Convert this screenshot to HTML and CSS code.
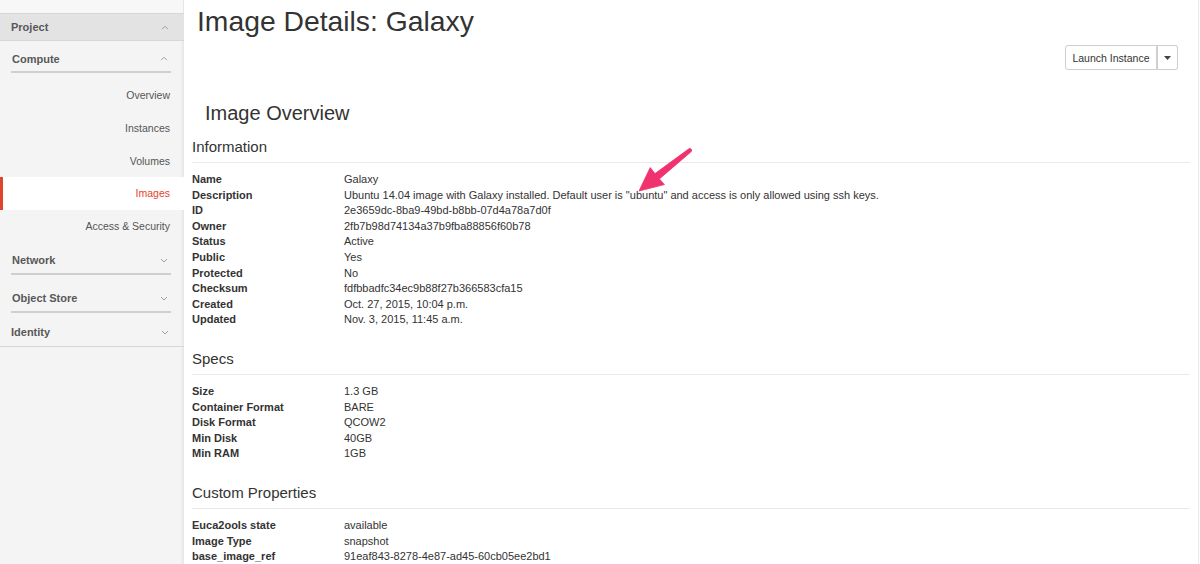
FILE: index.html
```html
<!DOCTYPE html>
<html>
<head>
<meta charset="utf-8">
<link rel="stylesheet" href="styles.css">
</head>
<body>
<div class="layout">
  <aside class="sidebar">
    <div class="sb-top"></div>
    <div class="panel">
      <div class="panel-head active-panel"><span>Project</span><svg class="chev" viewBox="0 0 8 5"><path d="M1 4.2 L4 1.2 L7 4.2"/></svg></div>
      <div class="panel-body">
        <div class="group">
          <div class="group-head"><span>Compute</span><svg class="chev" viewBox="0 0 8 5"><path d="M1 4.2 L4 1.2 L7 4.2"/></svg></div>
          <ul class="nav">
            <li>Overview</li>
            <li>Instances</li>
            <li>Volumes</li>
            <li class="active">Images</li>
            <li>Access &amp; Security</li>
          </ul>
        </div>
        <div class="group">
          <div class="group-head"><span>Network</span><svg class="chev" viewBox="0 0 8 5"><path d="M1 1 L4 4 L7 1"/></svg></div>
        </div>
        <div class="group group-last">
          <div class="group-head"><span>Object Store</span><svg class="chev" viewBox="0 0 8 5"><path d="M1 1 L4 4 L7 1"/></svg></div>
        </div>
      </div>
    </div>
    <div class="panel">
      <div class="panel-head"><span>Identity</span><svg class="chev" viewBox="0 0 8 5"><path d="M1 1 L4 4 L7 1"/></svg></div>
    </div>
  </aside>
  <main class="main">
    <h1 class="page-title">Image Details: Galaxy</h1>
    <div class="actions">
      <div class="btn-group">
        <button class="btn">Launch Instance</button>
        <button class="btn btn-caret"><svg viewBox="0 0 7 4"><path d="M0 0 L7 0 L3.5 4 Z"/></svg></button>
      </div>
    </div>
    <h2 class="overview-title">Image Overview</h2>

    <section class="info-section">
      <h3 class="section-title">Information</h3>
      <dl class="props">
        <dt>Name</dt><dd>Galaxy</dd>
        <dt>Description</dt><dd>Ubuntu 14.04 image with Galaxy installed. Default user is "ubuntu" and access is only allowed using ssh keys.</dd>
        <dt>ID</dt><dd>2e3659dc-8ba9-49bd-b8bb-07d4a78a7d0f</dd>
        <dt>Owner</dt><dd>2fb7b98d74134a37b9fba88856f60b78</dd>
        <dt>Status</dt><dd>Active</dd>
        <dt>Public</dt><dd>Yes</dd>
        <dt>Protected</dt><dd>No</dd>
        <dt>Checksum</dt><dd>fdfbbadfc34ec9b88f27b366583cfa15</dd>
        <dt>Created</dt><dd>Oct. 27, 2015, 10:04 p.m.</dd>
        <dt>Updated</dt><dd>Nov. 3, 2015, 11:45 a.m.</dd>
      </dl>
    </section>

    <section class="info-section">
      <h3 class="section-title">Specs</h3>
      <dl class="props">
        <dt>Size</dt><dd>1.3 GB</dd>
        <dt>Container Format</dt><dd>BARE</dd>
        <dt>Disk Format</dt><dd>QCOW2</dd>
        <dt>Min Disk</dt><dd>40GB</dd>
        <dt>Min RAM</dt><dd>1GB</dd>
      </dl>
    </section>

    <section class="info-section">
      <h3 class="section-title">Custom Properties</h3>
      <dl class="props">
        <dt>Euca2ools state</dt><dd>available</dd>
        <dt>Image Type</dt><dd>snapshot</dd>
        <dt>base_image_ref</dt><dd>91eaf843-8278-4e87-ad45-60cb05ee2bd1</dd>
      </dl>
    </section>
  </main>
</div>
<svg class="annotation" width="1200" height="564" viewBox="0 0 1200 564">
  <path d="M639 191 L650.2 167.6 L655.0 173.6 L689.2 148.6 Q691.2 148.0 691.6 150.0 Q691.6 151.4 690.8 152.0 L659.4 178.9 L664.4 184.6 Z" fill="#f0326f" stroke="#f0326f" stroke-width="0.8" stroke-linejoin="round"/>
</svg>
</body>
</html>
```

FILE: styles.css
```css
* { box-sizing: border-box; }
html, body { margin: 0; padding: 0; }
body {
  font-family: "Liberation Sans", Arial, Helvetica, sans-serif;
  color: #333;
  background: #fff;
  width: 1200px;
  height: 564px;
  overflow: hidden;
  position: relative;
}
.layout {
  display: flex;
  align-items: stretch;
  height: 564px;
}
.sidebar {
  width: 184px;
  flex: 0 0 184px;
  background: #f4f4f4;
  border-right: 1px solid #e6e6e6;
  box-shadow: inset -2px 0 2px rgba(0,0,0,0.03);
}
.sb-top { height: 13px; background: #f7f7f7; }
.panel-head {
  height: 28px;
  display: flex;
  align-items: center;
  justify-content: space-between;
  padding: 0 15px 0 11px;
  font-size: 11px;
  font-weight: bold;
  color: #585858;
  border-top: 1px solid #d6d6d6;
  border-bottom: 1px solid #d6d6d6;
  margin-right: -1px;
}
.panel + .panel .panel-head { border-top: none; height: 28px; }
.active-panel { background: #e3e3e3; }
.chev { width: 8px; height: 5px; }
.chev path { fill: none; stroke: #a0a0a0; stroke-width: 1; }
.panel-body { padding-bottom: 6px; }
.group { padding: 0 12px 0 11px; }
.group-head {
  height: 27px;
  display: flex;
  align-items: center;
  justify-content: space-between;
  padding: 0 3px 0 1px;
  font-size: 11px;
  font-weight: bold;
  color: #585858;
  border-bottom: 2px solid #cfcfcf;
  margin-top: 5px;
}
.group + .group { margin-top: 3px; }
.group-last { margin-top: 11px !important; }
.nav {
  list-style: none;
  margin: 0 -12px 0 -11px;
  padding: 6px 0 0 0;
}
.nav li {
  height: 32.75px;
  line-height: 32.75px;
  text-align: right;
  padding-right: 13px;
  font-size: 10.5px;
  color: #555;
}
.nav li.active {
  background: #fff;
  color: #e2432d;
  border-left: 3px solid #e2432d;
  margin-right: -2px;
  padding-right: 15px;
}

.main {
  flex: 1;
  padding: 0 8px 0 8px;
  border-right: 1px solid #ececec;
  margin-right: 1px;
}
.page-title {
  font-size: 28.3px;
  font-weight: normal;
  line-height: 32px;
  margin: 5px 0 0 5px;
  color: #333;
}
.actions {
  display: flex;
  justify-content: flex-end;
  margin-top: 8px;
  padding-right: 12px;
}
.btn-group { display: flex; }
.btn {
  font-family: inherit;
  font-size: 10.5px;
  color: #333;
  background: #fff;
  border: 1px solid #cfcfcf;
  height: 25px;
  padding: 0 6.5px;
  border-radius: 3px 0 0 3px;
  margin: 0;
}
.btn-caret {
  width: 21px;
  padding: 0;
  border-left: none;
  border-radius: 0 3px 3px 0;
  display: flex;
  align-items: center;
  justify-content: center;
  position: relative;
}
.btn-caret::before {
  content: "";
  position: absolute;
  left: 0; top: 0; bottom: 0;
  border-left: 1px solid #cfcfcf;
}
.btn-caret svg { width: 7px; height: 4px; }
.btn-caret path { fill: #444; }
.overview-title {
  font-size: 20px;
  font-weight: normal;
  line-height: 24px;
  margin: 31px 0 0 13px;
  color: #333;
}
.info-section { margin-top: 21px; }
.info-section:first-of-type { margin-top: 12px; }
.section-title {
  font-size: 15px;
  font-weight: normal;
  line-height: 20px;
  margin: 0;
  padding-bottom: 5px;
  border-bottom: 1px solid #e9e9e9;
  color: #333;
}
.props {
  display: grid;
  grid-template-columns: 152px 1fr;
  margin: 9px 0 0 0;
  font-size: 11px;
  line-height: 15.6px;
}
.props dt { font-weight: bold; color: #333; }
.props dd { margin: 0; color: #333; }
.annotation {
  position: absolute;
  left: 0;
  top: 0;
  pointer-events: none;
}
```
